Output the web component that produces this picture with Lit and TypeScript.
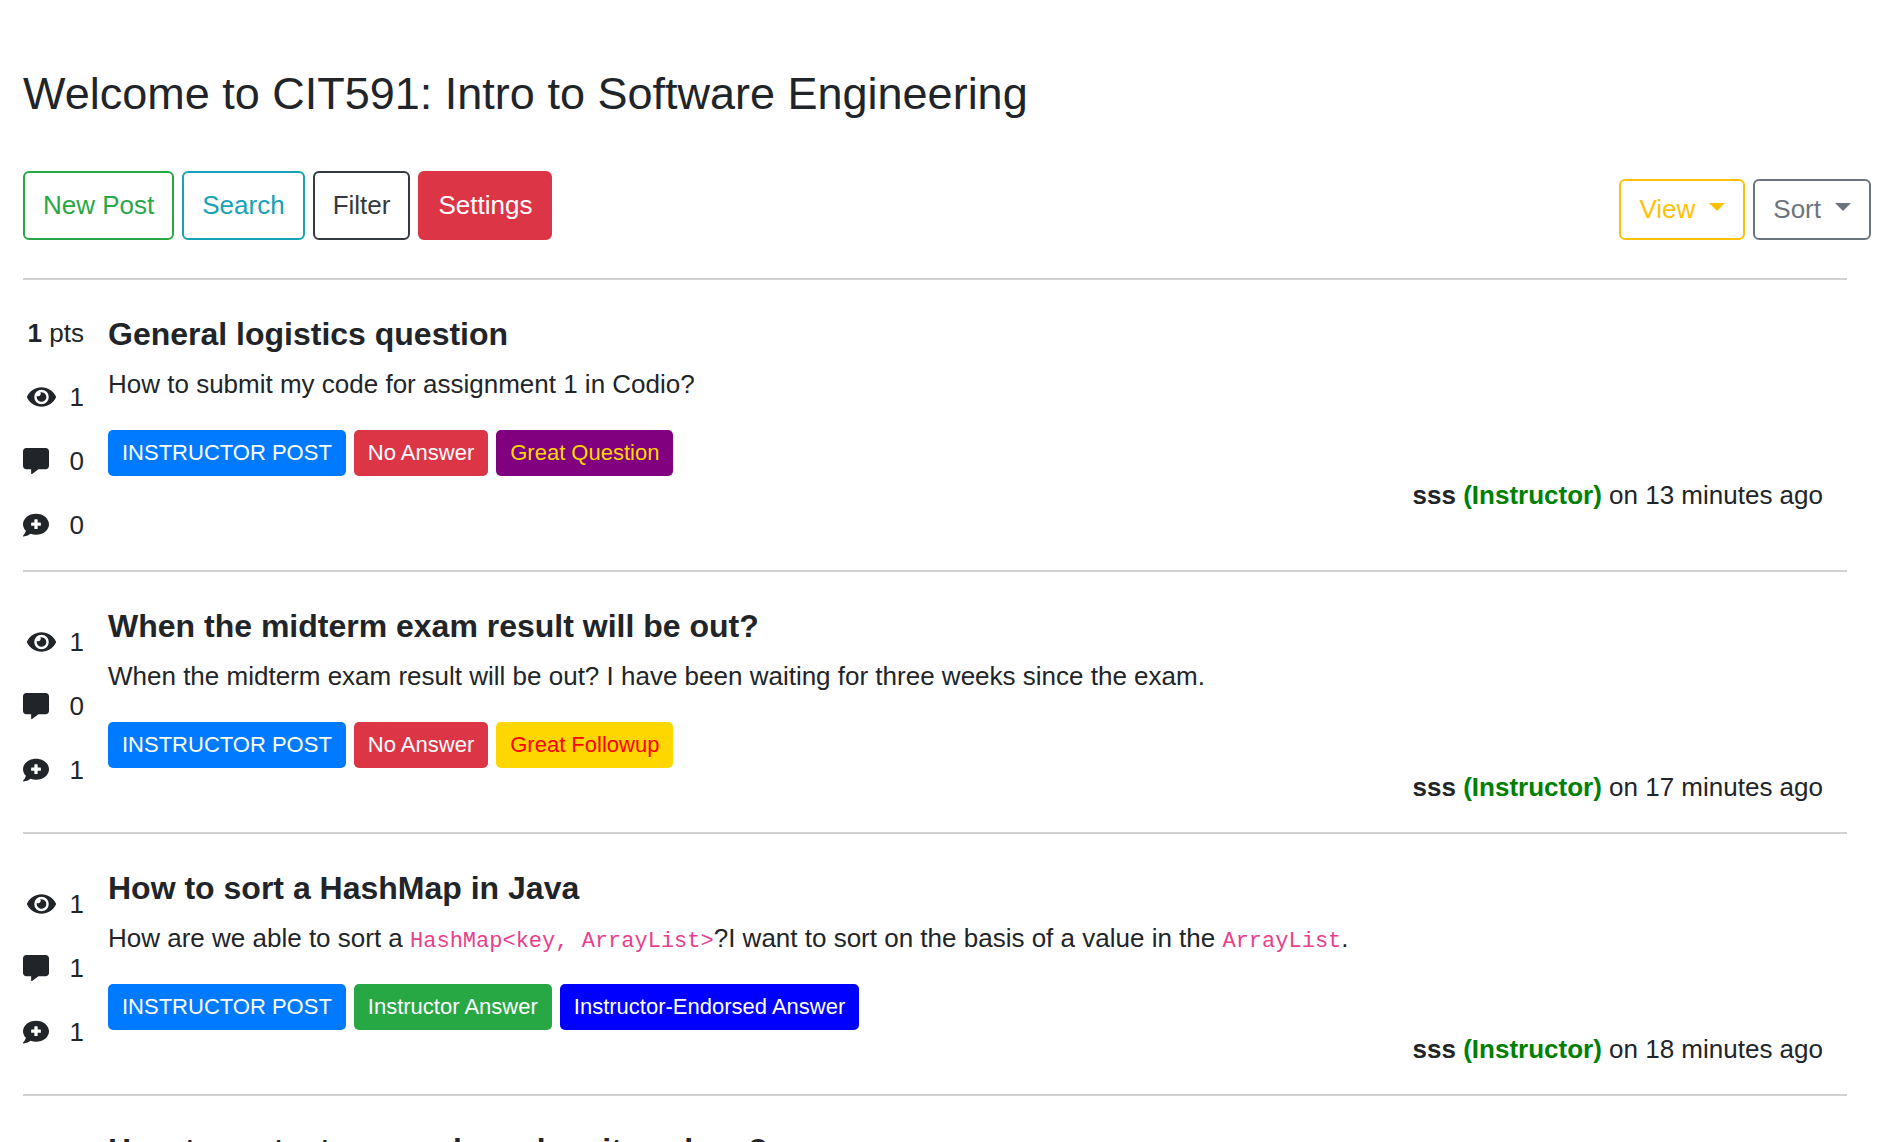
import { LitElement, html, css, svg, nothing, TemplateResult } from "lit";
import { customElement, property } from "lit/decorators.js";

interface Label {
  text: string;
  kind: string;
}

interface Post {
  title: string;
  summary?: TemplateResult | string;
  points?: number;
  views?: number;
  comments?: number;
  followups?: number;
  labels?: Label[];
  author?: string;
  role?: string;
  age?: string;
}

const INSTRUCTOR_POST: Label = { text: "INSTRUCTOR POST", kind: "primary" };
const NO_ANSWER: Label = { text: "No Answer", kind: "danger" };

const POSTS: Post[] = [
  {
    title: "General logistics question",
    summary: "How to submit my code for assignment 1 in Codio?",
    points: 1,
    views: 1,
    comments: 0,
    followups: 0,
    labels: [INSTRUCTOR_POST, NO_ANSWER, { text: "Great Question", kind: "question" }],
    author: "sss",
    role: "Instructor",
    age: "13 minutes ago",
  },
  {
    title: "When the midterm exam result will be out?",
    summary:
      "When the midterm exam result will be out? I have been waiting for three weeks since the exam.",
    views: 1,
    comments: 0,
    followups: 1,
    labels: [INSTRUCTOR_POST, NO_ANSWER, { text: "Great Followup", kind: "followup" }],
    author: "sss",
    role: "Instructor",
    age: "17 minutes ago",
  },
  {
    title: "How to sort a HashMap in Java",
    summary: html`How are we able to sort a <code>HashMap&lt;key, ArrayList&gt;</code>?I want to sort on the basis of a value in the <code>ArrayList</code>.`,
    views: 1,
    comments: 1,
    followups: 1,
    labels: [
      INSTRUCTOR_POST,
      { text: "Instructor Answer", kind: "success" },
      { text: "Instructor-Endorsed Answer", kind: "endorsed" },
    ],
    author: "sss",
    role: "Instructor",
    age: "18 minutes ago",
  },
  {
    title: "How to sort a treemap based on its values?",
  },
];

const EYE = svg`<path d="M572.52 241.4C518.29 135.59 410.93 64 288 64S57.68 135.64 3.48 241.41a32.35 32.35 0 0 0 0 29.19C57.71 376.41 165.07 448 288 448s230.32-71.64 284.52-177.41a32.35 32.35 0 0 0 0-29.19zM288 400a144 144 0 1 1 144-144 143.93 143.93 0 0 1-144 144zm0-240a95.31 95.31 0 0 0-25.31 3.79 47.85 47.85 0 0 1-66.9 66.9A95.78 95.78 0 1 0 288 160z"/>`;
const COMMENT = svg`<path d="M448 0H64C28.7 0 0 28.7 0 64v288c0 35.3 28.7 64 64 64h96v84c0 9.8 11.2 15.5 19.1 9.7L304 416h144c35.3 0 64-28.7 64-64V64c0-35.3-28.7-64-64-64z"/>`;
const FOLLOWUP = svg`<path d="M256 32C114.62 32 0 125.12 0 240c0 49.56 21.41 95 57 130.74C44.46 421.05 2.7 466 2.2 466.5A8 8 0 0 0 8 480c66.26 0 116-31.75 140.6-51.38A304.66 304.66 0 0 0 256 448c141.39 0 256-93.12 256-208S397.39 32 256 32zm96 232a8 8 0 0 1-8 8h-56v56a8 8 0 0 1-8 8h-48a8 8 0 0 1-8-8v-56h-56a8 8 0 0 1-8-8v-48a8 8 0 0 1 8-8h56v-56a8 8 0 0 1 8-8h48a8 8 0 0 1 8 8v56h56a8 8 0 0 1 8 8z"/>`;

@customElement("post-item")
export class PostItem extends LitElement {
  @property({ attribute: false }) post!: Post;

  static styles = css`
    :host {
      display: flex;
      box-sizing: border-box;
      min-height: 261px;
      padding: 26px 0;
      border-top: 2px solid #d2d2d2;
    }
    .stats {
      display: flex;
      flex-direction: column;
      flex: none;
      box-sizing: border-box;
      width: 85px;
      padding: 25px 24px 0 0;
    }
    .stats.scored {
      padding-top: 8px;
    }
    .stat {
      display: flex;
      align-items: center;
      justify-content: flex-end;
      gap: 21px;
      height: 38px;
      margin-bottom: 26px;
      white-space: nowrap;
    }
    .stat:last-child {
      margin-bottom: 0;
    }
    .stat.points {
      display: block;
      text-align: right;
    }
    .stat.views {
      gap: 14px;
    }
    svg {
      flex: none;
      width: 26px;
      height: 26px;
      fill: currentColor;
    }
    .views svg {
      width: 29px;
    }
    .body {
      flex: 1;
      min-width: 0;
    }
    h2 {
      margin: 0;
      padding-top: 8px;
      font-size: 32px;
      line-height: 40px;
      font-weight: 700;
    }
    p {
      margin: 0;
    }
    .summary {
      padding-top: 11px;
    }
    code {
      font-family: "Liberation Mono", monospace;
      font-size: 22px;
      line-height: 22px;
      color: #e83e8c;
    }
    .labels {
      display: flex;
      flex-wrap: wrap;
      gap: 8px;
      margin-top: 27px;
    }
    .label {
      padding: 11px 14px;
      border-radius: 5px;
      color: #fff;
      font-size: 22px;
      line-height: 24px;
      white-space: nowrap;
    }
    .primary { background: #007bff; }
    .danger { background: #dc3545; }
    .success { background: #28a745; }
    .endorsed { background: #0000ff; }
    .question { background: #800080; color: #ffd700; }
    .followup { background: #ffd700; color: #ff0000; }
    .byline {
      padding-right: 24px;
      text-align: right;
    }
    .role {
      color: #008000;
    }
  `;

  private stat(kind: string, name: string, box: string, icon: unknown, count: number) {
    return html`<div class="stat ${kind}">
      <svg viewBox=${box} role="img" aria-label=${name}>${icon}</svg><span>${count}</span>
    </div>`;
  }

  private stats(p: Post) {
    const scored = p.points !== undefined;
    return html`<div class="stats ${scored ? "scored" : ""}">
      ${scored ? html`<div class="stat points"><b>${p.points}</b> pts</div>` : nothing}
      ${p.views === undefined ? nothing : this.stat("views", "Views", "0 0 576 512", EYE, p.views)}
      ${p.comments === undefined ? nothing : this.stat("comments", "Comments", "0 0 512 512", COMMENT, p.comments)}
      ${p.followups === undefined ? nothing : this.stat("followups", "Followups", "0 0 512 512", FOLLOWUP, p.followups)}
    </div>`;
  }

  render() {
    const p = this.post;
    return html`
      ${this.stats(p)}
      <div class="body">
        <h2>${p.title}</h2>
        ${p.summary ? html`<p class="summary">${p.summary}</p>` : nothing}
        ${p.labels
          ? html`<div class="labels">
              ${p.labels.map((l) => html`<span class="label ${l.kind}">${l.text}</span>`)}
            </div>`
          : nothing}
        ${p.author
          ? html`<p class="byline"><b>${p.author} <span class="role">(${p.role})</span></b> on ${p.age}</p>`
          : nothing}
      </div>
    `;
  }
}

@customElement("app-root")
export class AppRoot extends LitElement {
  static styles = css`
    :host {
      display: block;
      box-sizing: border-box;
      height: 100vh;
      overflow: hidden;
      padding: 67px 15px 0 23px;
      background: #fff;
      color: #212529;
      font-family: "Liberation Sans", Arial, sans-serif;
      font-size: 26px;
      line-height: 38px;
    }
    h1 {
      margin: 0;
      font-size: 45px;
      line-height: 54px;
      font-weight: 400;
    }
    .toolbar {
      display: flex;
      justify-content: space-between;
      align-items: flex-end;
      margin: 50px 0 38px;
    }
    .group {
      display: flex;
      gap: 8px;
    }
    button {
      box-sizing: border-box;
      height: 69px;
      padding: 0 18px 2px;
      border: 2px solid currentColor;
      border-radius: 6px;
      background: transparent;
      font: inherit;
      white-space: nowrap;
      cursor: pointer;
    }
    .new { color: #28a745; }
    .search { color: #17a2b8; }
    .filter { color: #343a40; }
    .settings {
      border-color: #dc3545;
      background: #dc3545;
      color: #fff;
    }
    .toggle {
      display: flex;
      align-items: center;
      gap: 14px;
      height: 61px;
    }
    .toggle::after {
      content: "";
      margin-bottom: 4px;
      border-top: 8px solid currentColor;
      border-left: 8px solid transparent;
      border-right: 8px solid transparent;
    }
    .view { color: #ffc107; }
    .sort { color: #6c757d; }
    .posts {
      padding-right: 24px;
    }
  `;

  render() {
    return html`
      <h1>Welcome to CIT591: Intro to Software Engineering</h1>
      <div class="toolbar">
        <div class="group">
          <button class="new" type="button">New Post</button>
          <button class="search" type="button">Search</button>
          <button class="filter" type="button">Filter</button>
          <button class="settings" type="button">Settings</button>
        </div>
        <div class="group">
          <button class="toggle view" type="button" aria-haspopup="menu">View</button>
          <button class="toggle sort" type="button" aria-haspopup="menu">Sort</button>
        </div>
      </div>
      <main class="posts">
        ${POSTS.map((post) => html`<post-item .post=${post}></post-item>`)}
      </main>
    `;
  }
}
